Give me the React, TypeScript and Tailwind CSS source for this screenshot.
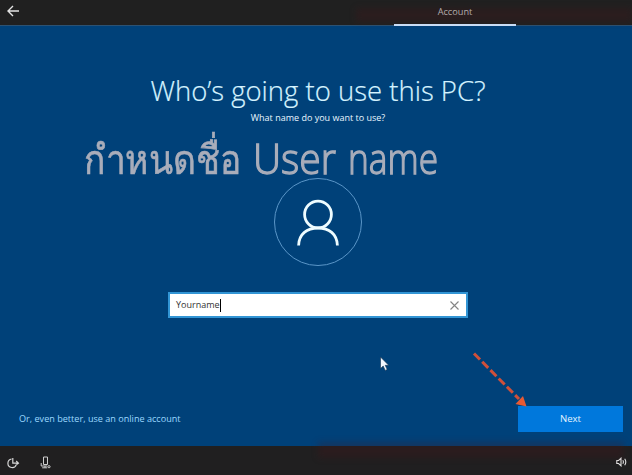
import React from "react";

const ui = "font-['Open_Sans','Noto_Sans',sans-serif]";

function TopBar() {
  return (
    <header className="relative flex h-[26px] shrink-0 items-start border-b border-[#2c5273] bg-[#202020]">
      <svg className="ml-[7px] mt-[5px] h-3 w-3" viewBox="0 0 12 12" fill="none" stroke="#e4e4e4" strokeWidth="1.4">
        <path d="M6 1 1 6l5 5M1 6h11" />
      </svg>
      <div className="absolute right-0 top-2 h-[14px] w-[276px] bg-[#4a1418]/25 blur-[3px]" />
      <div className="relative ml-[375px] flex h-[26px] w-[122px] items-start justify-center border-b-2 border-[#c9dcf5] pt-[5px] text-[9.2px] leading-[13px] text-[#b3acac]">
        <span>Account</span>
      </div>
    </header>
  );
}

function Avatar() {
  return (
    <div className="mt-[53px] flex h-[88px] w-[88px] items-center justify-center rounded-full border border-[#5b96c8]">
      <svg className="h-[88px] w-[88px] shrink-0" viewBox="0 0 88 88" fill="none" stroke="#eefcff" strokeWidth="2.8">
        <circle cx="44" cy="36.5" r="13.4" />
        <path d="M24.6 67.5C25 56 33 50 44 50s19 6 19.4 17.5" />
      </svg>
    </div>
  );
}

function Annotations() {
  return (
    <>
      <div className="pointer-events-none absolute left-[84px] top-[130px] flex h-[60px] items-baseline whitespace-nowrap font-light leading-[56px] text-[#a9adba]">
        <span className="w-[157px] text-[41px] [-webkit-text-stroke:0.6px_#a9adba]">
          <span className="inline-block origin-left scale-x-[0.862]">กำหนดชื่อ</span>
        </span>
        <span className="ml-3 w-[83px] text-[42px] [-webkit-text-stroke:1.3px_#a9adba]">
          <span className="inline-block origin-left scale-x-[0.93]">User</span>
        </span>
        <span className="ml-3 text-[42px] [-webkit-text-stroke:1.3px_#a9adba]">
          <span className="inline-block origin-left scale-x-[0.84]">name</span>
        </span>
      </div>
      <svg className="pointer-events-none absolute inset-0 h-[475px] w-[632px]" viewBox="0 0 632 475">
        <path d="M474 353.5 519 399" stroke="#cf503a" strokeWidth="3" strokeDasharray="8.5 3.2" />
        <path d="m526.5 406.5-11-2.5 7.5-8Z" fill="#e65a34" />
        <path d="M380.5 357v11.5l2.7-2.5 2 4.4 2-.9-2-4.2h3.5Z" fill="#f4f8ff" stroke="#14304e" strokeWidth="0.6" />
      </svg>
    </>
  );
}

function BottomBar() {
  return (
    <footer className="relative flex h-[29px] shrink-0 items-center bg-[#201f20]">
      <div className="absolute -top-1 left-[318px] h-4 w-[306px] bg-[#4a1418]/25 blur-[3px]" />
      <svg className="ml-[7px] mt-1 h-3 w-[13px]" viewBox="0 0 13 12" fill="none" stroke="#d6d6d6" strokeWidth="1.2">
        <path d="M4.6 2A4.3 4.3 0 1 0 9.3 7.6M5.8 1v5.2h5.7M9.2 4l2.2 2.2-1.8 1.2" />
      </svg>
      <svg className="ml-5 mt-1 h-[13px] w-3" viewBox="0 0 12 13" fill="none" stroke="#cfcfcf" strokeWidth="1">
        <path d="M3.5 1h4v7.5h-4zM1.2 7v3h6M5 10v1.8M2.2 11.8h5" />
        <circle cx="9" cy="10.7" r="1.1" />
      </svg>
      <svg className="ml-auto mr-[5px] mt-[3px] h-[10px] w-[11px]" viewBox="0 0 11 10" fill="none" stroke="#e2e2e2" strokeWidth="1.1">
        <path d="M.8 3.5h1.8L5 1.2v7.6L2.6 6.5H.8ZM6.8 3.2q1.2 1.8 0 3.6M8.7 1.8q2.2 3.2 0 6.4" />
      </svg>
    </footer>
  );
}

export default function App() {
  return (
    <div className={`relative flex h-[475px] w-[632px] flex-col overflow-hidden bg-[#004179] ${ui}`}>
      <TopBar />
      <main className="flex flex-1 flex-col">
        <section className="flex flex-col items-center pl-1">
          <h1 className="mt-[45px] whitespace-nowrap text-[27.5px] font-light leading-10 text-[#d5f3ff] [-webkit-text-stroke:0.2px_#d5f3ff]">Who’s going to use this PC?</h1>
          <p className="whitespace-nowrap text-[9px] leading-[14px] text-[#e8f6ff]">What name do you want to use?</p>
          <Avatar />
          <div className="mt-[26px] flex h-[26px] w-[300px] items-center border-2 border-[#3295d5] bg-white pl-[6px] pr-[7px] text-[9px] text-[#333]">
            <span>Yourname</span>
            <span className="h-[13px] w-px bg-black" />
            <svg className="ml-auto h-[9px] w-[9px]" viewBox="0 0 9 9" stroke="#858585" strokeWidth="1.1">
              <path d="m.5.5 8 8m0-8-8 8" />
            </svg>
          </div>
        </section>
        <div className="mb-[14px] mt-auto flex w-full items-center justify-between pl-[19px] pr-[9px] text-[9.1px]">
          <a className="whitespace-nowrap text-[#9bd8ff]">Or, even better, use an online account</a>
          <button className="h-[26px] w-[105px] bg-[#0078dc] text-[9.6px] text-[#e2f4ff]">Next</button>
        </div>
      </main>
      <BottomBar />
      <Annotations />
    </div>
  );
}
